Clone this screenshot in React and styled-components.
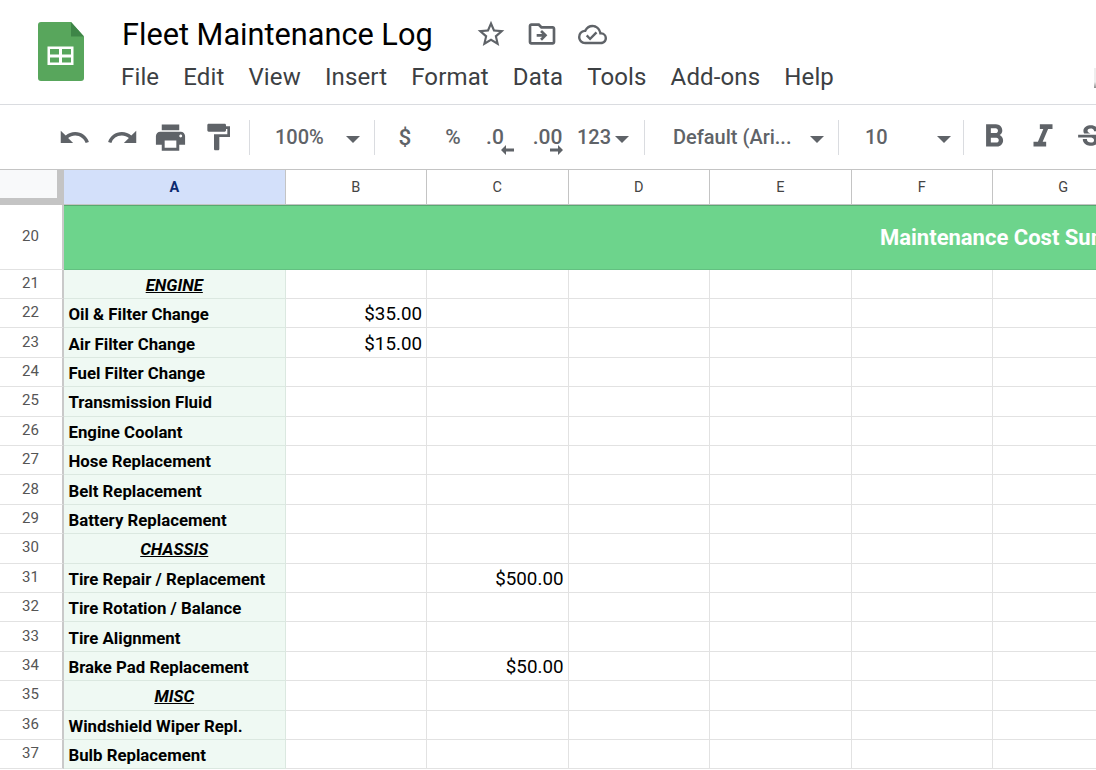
import styled, { createGlobalStyle } from "styled-components";
import {
  MdUndo,
  MdRedo,
  MdPrint,
  MdFormatPaint,
  MdStarBorder,
  MdOutlineDriveFileMove,
  MdOutlineCloudDone,
  MdFormatBold,
  MdFormatItalic,
  MdStrikethroughS,
} from "react-icons/md";

const GlobalStyle = createGlobalStyle`
  html, body { margin: 0; padding: 0; background: #fff; overflow: hidden; }
  body { font-family: Roboto, "Liberation Sans", sans-serif; }
`;

const Page = styled.div`
  width: 1096px;
  height: 770px;
  overflow: hidden;
  display: flex;
  flex-direction: column;
`;

const TopBar = styled.header`
  height: 104px;
  display: flex;
  border-bottom: 1px solid #dadce0;
  flex: none;
`;

const LogoSlot = styled.div`
  width: 121px;
  padding: 22px 0 0 38px;
  box-sizing: border-box;
  flex: none;
`;

const TitleColumn = styled.div`
  display: flex;
  flex-direction: column;
`;

const TitleRow = styled.div`
  display: flex;
  align-items: center;
  height: 34px;
  margin-top: 17px;
  color: #5f6368;
`;

const Title = styled.div`
  font-size: 30.7px;
  color: #000;
  width: 344px;
  padding-left: 1px;
  box-sizing: border-box;
  white-space: nowrap;
`;

const TitleIcon = styled.span`
  width: 51px;
  display: flex;
  justify-content: center;
  font-size: ${(p) => p.$size}px;
`;

const MenuRow = styled.nav`
  display: flex;
  gap: 24px;
  margin-top: 12px;
  font-size: 24px;
  letter-spacing: 0.14px;
  color: #3c4043;
`;

const EdgeSliver = styled.div`
  width: 2px;
  height: 20px;
  margin: 68px 0 0 auto;
  background: linear-gradient(#eeeeee 70%, #8a8a8a);
`;

const Toolbar = styled.div`
  height: 65px;
  flex: none;
  display: flex;
  align-items: center;
  padding-left: 50px;
  color: #5f6368;
  box-sizing: border-box;
  overflow: hidden;
  border-bottom: 1px solid #c4c4c4;
`;

const ToolButton = styled.div`
  width: ${(p) => p.$w}px;
  flex: none;
  display: flex;
  justify-content: center;
  align-items: center;
  font-size: ${(p) => p.$size || 22}px;
  font-weight: ${(p) => p.$weight || 400};
`;

const Separator = styled.div`
  width: 1px;
  height: 35px;
  background: #dadce0;
  flex: none;
  margin-left: ${(p) => p.$left || 0}px;
`;

const Select = styled.div`
  width: ${(p) => p.$w}px;
  flex: none;
  box-sizing: border-box;
  display: flex;
  justify-content: space-between;
  align-items: center;
  padding: 0 ${(p) => p.$right}px 0 ${(p) => p.$left}px;
  font-size: 20px;
  font-weight: 500;
`;

const Caret = styled.span`
  width: 0;
  height: 0;
  border-left: 7.5px solid transparent;
  border-right: 7.5px solid transparent;
  border-top: 7.5px solid #5f6368;
  margin-top: 4px;
  flex: none;
`;

const DecimalIcon = styled.div`
  position: relative;
  font-size: 21px;
  font-weight: 500;
  line-height: 24px;
`;

const DecimalArrow = styled.svg`
  position: absolute;
  top: 20px;
  right: ${(p) => p.$right}px;
  width: 13px;
  height: 10px;
  fill: #5f6368;
`;

const Grid = styled.div`
  display: grid;
  grid-template-columns: 64px 221.5px 141.5px 141.5px 141.5px 141.5px 141.5px 141.5px;
  grid-template-rows: 34.5px 65px;
  grid-auto-rows: 29.41px;
  flex: none;
  width: 1135px;
`;

const Corner = styled.div`
  background: #c4c4c4;
  padding: 0 7px 7px 0;
`;

const CornerFill = styled.div`
  background: #f8f9fa;
  height: 100%;
`;

const ColumnHead = styled.div`
  display: flex;
  align-items: center;
  justify-content: center;
  font-size: 14.5px;
  padding-top: 2px;
  box-sizing: border-box;
  color: ${(p) => (p.$active ? "#0b2a6f" : "#444")};
  font-weight: ${(p) => (p.$active ? 700 : 400)};
  background: ${(p) => (p.$active ? "#d3e0fa" : "#fff")};
  border-right: 1px solid #c4c4c4;
  border-bottom: 1px solid #c4c4c4;
`;

const RowHead = styled.div`
  display: flex;
  align-items: center;
  justify-content: center;
  font-size: 15px;
  color: #555;
  padding-right: 1px;
  padding-bottom: 2px;
  box-sizing: border-box;
  border-right: 2px solid #c9c9c9;
  border-bottom: 1px solid #e2e2e2;
`;

const Banner = styled.div`
  grid-column: 2 / -1;
  background: #6dd48c;
  border-top: 1px solid #57a970;
  border-bottom: 1px solid #63c081;
  box-sizing: border-box;
  display: flex;
  align-items: center;
  padding: 0 0 0 816px;
  color: #fff;
  font-size: 22px;
  font-weight: 700;
  white-space: nowrap;
`;

const LabelCell = styled.div`
  background: #eff9f3;
  border-right: 1px solid #dbe8e0;
  border-bottom: 1px solid #dbe8e0;
  box-sizing: border-box;
  display: flex;
  align-items: center;
  justify-content: ${(p) => (p.$section ? "center" : "flex-start")};
  padding-left: ${(p) => (p.$section ? 0 : 4.5)}px;
  padding-top: 2px;
  font-size: 16.8px;
  font-weight: 700;
  color: #000;
  white-space: nowrap;
  font-style: ${(p) => (p.$section ? "italic" : "normal")};
  text-decoration: ${(p) => (p.$section ? "underline" : "none")};
`;

const Cell = styled.div`
  border-right: 1px solid #e2e2e2;
  border-bottom: 1px solid #e2e2e2;
  box-sizing: border-box;
  display: flex;
  align-items: center;
  justify-content: flex-end;
  padding: 2px 4px 0 0;
  font-size: 18.8px;
  color: #000;
`;

const columns = ["A", "B", "C", "D", "E", "F", "G"];
const menus = ["File", "Edit", "View", "Insert", "Format", "Data", "Tools", "Add-ons", "Help"];

const rows = [
  { n: 21, label: "ENGINE", section: true },
  { n: 22, label: "Oil & Filter Change", b: "$35.00" },
  { n: 23, label: "Air Filter Change", b: "$15.00" },
  { n: 24, label: "Fuel Filter Change" },
  { n: 25, label: "Transmission Fluid" },
  { n: 26, label: "Engine Coolant" },
  { n: 27, label: "Hose Replacement" },
  { n: 28, label: "Belt Replacement" },
  { n: 29, label: "Battery Replacement" },
  { n: 30, label: "CHASSIS", section: true },
  { n: 31, label: "Tire Repair / Replacement", c: "$500.00" },
  { n: 32, label: "Tire Rotation / Balance" },
  { n: 33, label: "Tire Alignment" },
  { n: 34, label: "Brake Pad Replacement", c: "$50.00" },
  { n: 35, label: "MISC", section: true },
  { n: 36, label: "Windshield Wiper Repl." },
  { n: 37, label: "Bulb Replacement" },
];

function SheetsLogo() {
  return (
    <svg width="46" height="59" viewBox="0 0 46 59">
      <path d="M3 0h30l13 14.500V56a3 3 0 0 1-3 3H3a3 3 0 0 1-3-3V3a3 3 0 0 1 3-3z" fill="#58a65c" />
      <path d="M33 0l13 14.500H33z" fill="#3e8547" />
      <path d="M9.500 24.500h26V43h-26z M12 27v5.500h9V27z M24 27v5.500h9V27z M12 35.500v5h9v-5z M24 35.500v5h9v-5z" fill="#fff" fillRule="evenodd" />
    </svg>
  );
}

function Row({ row }) {
  return (
    <>
      <RowHead>{row.n}</RowHead>
      <LabelCell $section={row.section}>{row.label}</LabelCell>
      <Cell>{row.b}</Cell>
      <Cell>{row.c}</Cell>
      <Cell />
      <Cell />
      <Cell />
      <Cell />
    </>
  );
}

export default function App() {
  return (
    <Page>
      <GlobalStyle />
      <TopBar>
        <LogoSlot>
          <SheetsLogo />
        </LogoSlot>
        <TitleColumn>
          <TitleRow>
            <Title>Fleet Maintenance Log</Title>
            <TitleIcon $size={32}><MdStarBorder /></TitleIcon>
            <TitleIcon $size={32}><MdOutlineDriveFileMove /></TitleIcon>
            <TitleIcon $size={29}><MdOutlineCloudDone /></TitleIcon>
          </TitleRow>
          <MenuRow>
            {menus.map((m) => (
              <span key={m}>{m}</span>
            ))}
          </MenuRow>
        </TitleColumn>
        <EdgeSliver />
      </TopBar>

      <Toolbar>
        <ToolButton $w={48} $size={33}><MdUndo /></ToolButton>
        <ToolButton $w={48} $size={33}><MdRedo /></ToolButton>
        <ToolButton $w={48} $size={35}><MdPrint /></ToolButton>
        <ToolButton $w={48} $size={32}><MdFormatPaint /></ToolButton>
        <Separator $left={7} />
        <Select $w={124} $left={25} $right={14}>100%<Caret /></Select>
        <Separator />
        <ToolButton $w={60} $size={22.5} $weight={500}>$</ToolButton>
        <ToolButton $w={36} $size={21} $weight={500}>%</ToolButton>
        <ToolButton $w={48}>
          <DecimalIcon>
            .0
            <DecimalArrow $right={-10} viewBox="0 0 13 10"><path d="M0 5l5-5v3.500h8v3H5V10z" /></DecimalArrow>
          </DecimalIcon>
        </ToolButton>
        <ToolButton $w={57}>
          <DecimalIcon>
            .00
            <DecimalArrow $right={-1} viewBox="0 0 13 10"><path d="M13 5L8 0v3.500H0v3h8V10z" /></DecimalArrow>
          </DecimalIcon>
        </ToolButton>
        <Select $w={68} $left={1} $right={15}>123<Caret /></Select>
        <Separator />
        <Select $w={193} $left={28} $right={14}>Default (Ari...<Caret /></Select>
        <Separator />
        <Select $w={124} $left={26} $right={12}>10<Caret /></Select>
        <Separator />
        <ToolButton $w={60} $size={38}><MdFormatBold /></ToolButton>
        <ToolButton $w={38} $size={38}><MdFormatItalic /></ToolButton>
        <ToolButton $w={56} $size={33}><MdStrikethroughS /></ToolButton>
      </Toolbar>

      <Grid>
        <Corner><CornerFill /></Corner>
        {columns.map((c, i) => (
          <ColumnHead key={c} $active={i === 0}>{c}</ColumnHead>
        ))}

        <RowHead>20</RowHead>
        <Banner>Maintenance Cost Summary</Banner>

        {rows.map((r) => (
          <Row key={r.n} row={r} />
        ))}
      </Grid>
    </Page>
  );
}
